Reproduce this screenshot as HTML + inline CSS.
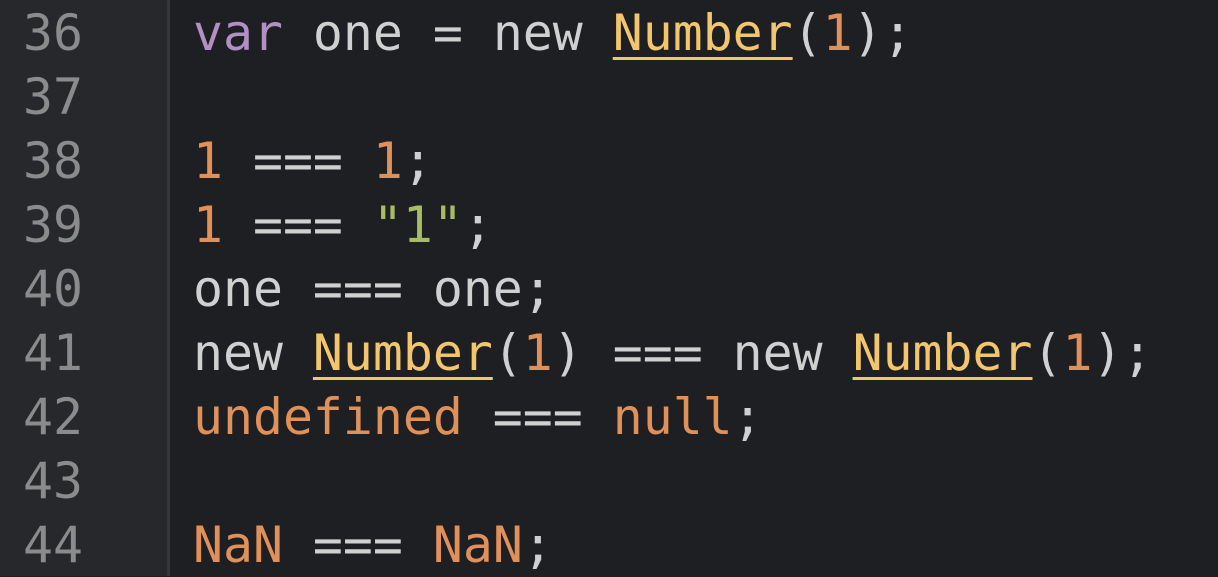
<!DOCTYPE html><html><head><style>
body{margin:0;width:1218px;height:576px;overflow:hidden;background:#1e1f22;font-family:"DejaVu Sans Mono","Liberation Mono",monospace;font-size:49.8px;}
.g{position:absolute;left:0;top:0;width:170px;height:576px;background:#27282c;border-right:3px solid #35363b;box-sizing:border-box}
.n{position:absolute;left:23px;color:#8b8b8b}
.c{position:absolute;left:193px;color:#cfd0d0;white-space:pre}
.l{height:64px;line-height:64px}
.k{color:#b290c4}.o{color:#e0915a}.y{color:#f3c66e;text-decoration:underline;text-decoration-thickness:3px;text-underline-offset:7px}.s{color:#a7bd64}
</style></head><body>
<div class="g"></div>
<div class="n" style="top:1px"><div class="l">36</div><div class="l">37</div><div class="l">38</div><div class="l">39</div><div class="l">40</div><div class="l">41</div><div class="l">42</div><div class="l">43</div><div class="l">44</div></div>
<div class="c" style="top:1px"><div class="l"><span class="k">var</span> one = new <span class="y">Number</span>(<span class="o">1</span>);</div><div class="l"> </div><div class="l"><span class="o">1</span> === <span class="o">1</span>;</div><div class="l"><span class="o">1</span> === <span class="s">"1"</span>;</div><div class="l">one === one;</div><div class="l">new <span class="y">Number</span>(<span class="o">1</span>) === new <span class="y">Number</span>(<span class="o">1</span>);</div><div class="l"><span class="o">undefined</span> === <span class="o">null</span>;</div><div class="l"> </div><div class="l"><span class="o">NaN</span> === <span class="o">NaN</span>;</div></div>
</body></html>
